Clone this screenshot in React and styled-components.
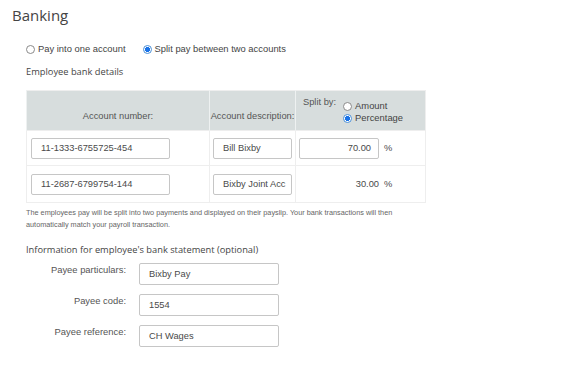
import React from "react";
import styled, { createGlobalStyle } from "styled-components";

const Global = createGlobalStyle`
  html, body { margin: 0; padding: 0; background: #fff; }
  body { font-family: "Liberation Sans", Arial, sans-serif; color: #555; }
  * { box-sizing: border-box; }
`;

const Page = styled.div`
  width: 576px;
  height: 370px;
  padding: 5px 0 0 12px;
`;

const Title = styled.h1`
  margin: 0;
  font-family: "Open Sans", sans-serif;
  font-weight: 400;
  font-size: 15px;
  line-height: 20px;
  color: #444;
`;

const Section = styled.div`
  padding-left: 14px;
`;

const RadioRow = styled.div`
  display: flex;
  gap: 17px;
  margin-top: 17px;
  height: 14px;
  align-items: center;
`;

const RadioLabel = styled.label`
  display: flex;
  align-items: center;
  gap: 3px;
  font-size: 9.4px;
  color: #444;
  line-height: 12px;
`;

const Radio = styled.span`
  display: inline-block;
  width: 9px;
  height: 9px;
  border-radius: 50%;
  border: 1px solid ${(p) => (p.$checked ? "#4a8fd6" : "#8a8a8a")};
  background: ${(p) =>
    p.$checked
      ? "radial-gradient(circle, #1a73e8 0 2.3px, #fff 2.8px)"
      : "#fff"};
  flex: none;
`;

const SubHeading = styled.div`
  font-family: "Open Sans", sans-serif;
  font-size: 9.3px;
  color: #444;
  line-height: 12px;
  margin-top: ${(p) => p.$top}px;
`;

const Table = styled.table`
  border-collapse: collapse;
  margin-top: 12px;
  width: 399px;
  table-layout: fixed;
  border: 1px solid #eee;
`;

const Th = styled.th`
  background: #d7dddd;
  font-weight: 400;
  font-size: 9.3px;
  color: #555;
  height: 40px;
  vertical-align: ${(p) => (p.$top ? "top" : "bottom")};
  text-align: ${(p) => (p.$top ? "left" : "center")};
  padding: ${(p) => (p.$top ? "6px 0 0 7px" : "0 0 9px 0")};
  border-left: 1px solid #eef1f1;
  white-space: nowrap;
`;

const Td = styled.td`
  height: ${(p) => p.$h}px;
  padding: 0 0 0 ${(p) => p.$pl}px;
  border-top: 1px solid #eee;
  border-left: 1px solid #eee;
  vertical-align: middle;
`;

const SplitBox = styled.div`
  display: flex;
  gap: 7px;
`;

const SplitOptions = styled.div`
  display: flex;
  flex-direction: column;
  gap: 0px;
  padding-top: 3px;
`;

const TextInput = styled.div`
  width: ${(p) => p.$w}px;
  height: ${(p) => p.$h || 21}px;
  border: 1px solid #c6c6c6;
  border-radius: 2px;
  background: #fff;
  font-size: 9.3px;
  font-weight: 400;
  color: #4a4a4a;
  display: flex;
  align-items: center;
  justify-content: ${(p) => (p.$right ? "flex-end" : "flex-start")};
  padding: 0 ${(p) => (p.$right ? 7 : 0)}px 0 ${(p) => (p.$right ? 0 : p.$pl || 9)}px;
  white-space: nowrap;
  overflow: hidden;
`;

const PercentWrap = styled.div`
  display: flex;
  align-items: center;
  font-size: 9.3px;
  color: #4a4a4a;
`;

const Unit = styled.span`
  margin-left: 5px;
`;

const Amount = styled.span`
  width: 80px;
  text-align: right;
`;

const Note = styled.p`
  margin: 4px 0 0;
  font-size: 7.3px;
  line-height: 12px;
  color: #666;
  width: 400px;
`;

const FormGrid = styled.div`
  display: grid;
  grid-template-columns: 100px 140px;
  column-gap: 13px;
  row-gap: 9px;
  margin-top: 7px;
`;

const FieldLabel = styled.div`
  text-align: right;
  font-size: 9.4px;
  color: #555;
  padding-top: 1px;
`;

export default function App() {
  return (
    <Page>
      <Global />
      <Title>Banking</Title>
      <Section>
        <RadioRow>
          <RadioLabel>
            <Radio /> Pay into one account
          </RadioLabel>
          <RadioLabel>
            <Radio $checked /> Split pay between two accounts
          </RadioLabel>
        </RadioRow>
        <SubHeading $top={10}>Employee bank details</SubHeading>
        <Table>
          <colgroup>
            <col style={{ width: 183 }} />
            <col style={{ width: 86 }} />
            <col style={{ width: 130 }} />
          </colgroup>
          <thead>
            <tr>
              <Th>Account number:</Th>
              <Th>Account description:</Th>
              <Th $top>
                <SplitBox>
                  <span>Split by:</span>
                  <SplitOptions>
                    <RadioLabel>
                      <Radio /> Amount
                    </RadioLabel>
                    <RadioLabel>
                      <Radio $checked /> Percentage
                    </RadioLabel>
                  </SplitOptions>
                </SplitBox>
              </Th>
            </tr>
          </thead>
          <tbody>
            <tr>
              <Td $h={35} $pl={4}>
                <TextInput $w={139}>11-1333-6755725-454</TextInput>
              </Td>
              <Td $h={35} $pl={3}>
                <TextInput $w={79}>Bill Bixby</TextInput>
              </Td>
              <Td $h={35} $pl={3}>
                <PercentWrap>
                  <TextInput $w={80} $right>
                    70.00
                  </TextInput>
                  <Unit>%</Unit>
                </PercentWrap>
              </Td>
            </tr>
            <tr>
              <Td $h={37} $pl={4}>
                <TextInput $w={139}>11-2687-6799754-144</TextInput>
              </Td>
              <Td $h={37} $pl={3}>
                <TextInput $w={79}>Bixby Joint Acc</TextInput>
              </Td>
              <Td $h={37} $pl={3}>
                <PercentWrap>
                  <Amount>30.00</Amount>
                  <Unit>%</Unit>
                </PercentWrap>
              </Td>
            </tr>
          </tbody>
        </Table>
        <Note>
          The employees pay will be split into two payments and displayed on their payslip. Your bank transactions will then
          automatically match your payroll transaction.
        </Note>
        <SubHeading $top={13}>Information for employee's bank statement (optional)</SubHeading>
        <FormGrid>
          <FieldLabel>Payee particulars:</FieldLabel>
          <TextInput $w={140} $h={22} $pl={9}>Bixby Pay</TextInput>
          <FieldLabel>Payee code:</FieldLabel>
          <TextInput $w={140} $h={22} $pl={9}>1554</TextInput>
          <FieldLabel>Payee reference:</FieldLabel>
          <TextInput $w={140} $h={22} $pl={9}>CH Wages</TextInput>
        </FormGrid>
      </Section>
    </Page>
  );
}
